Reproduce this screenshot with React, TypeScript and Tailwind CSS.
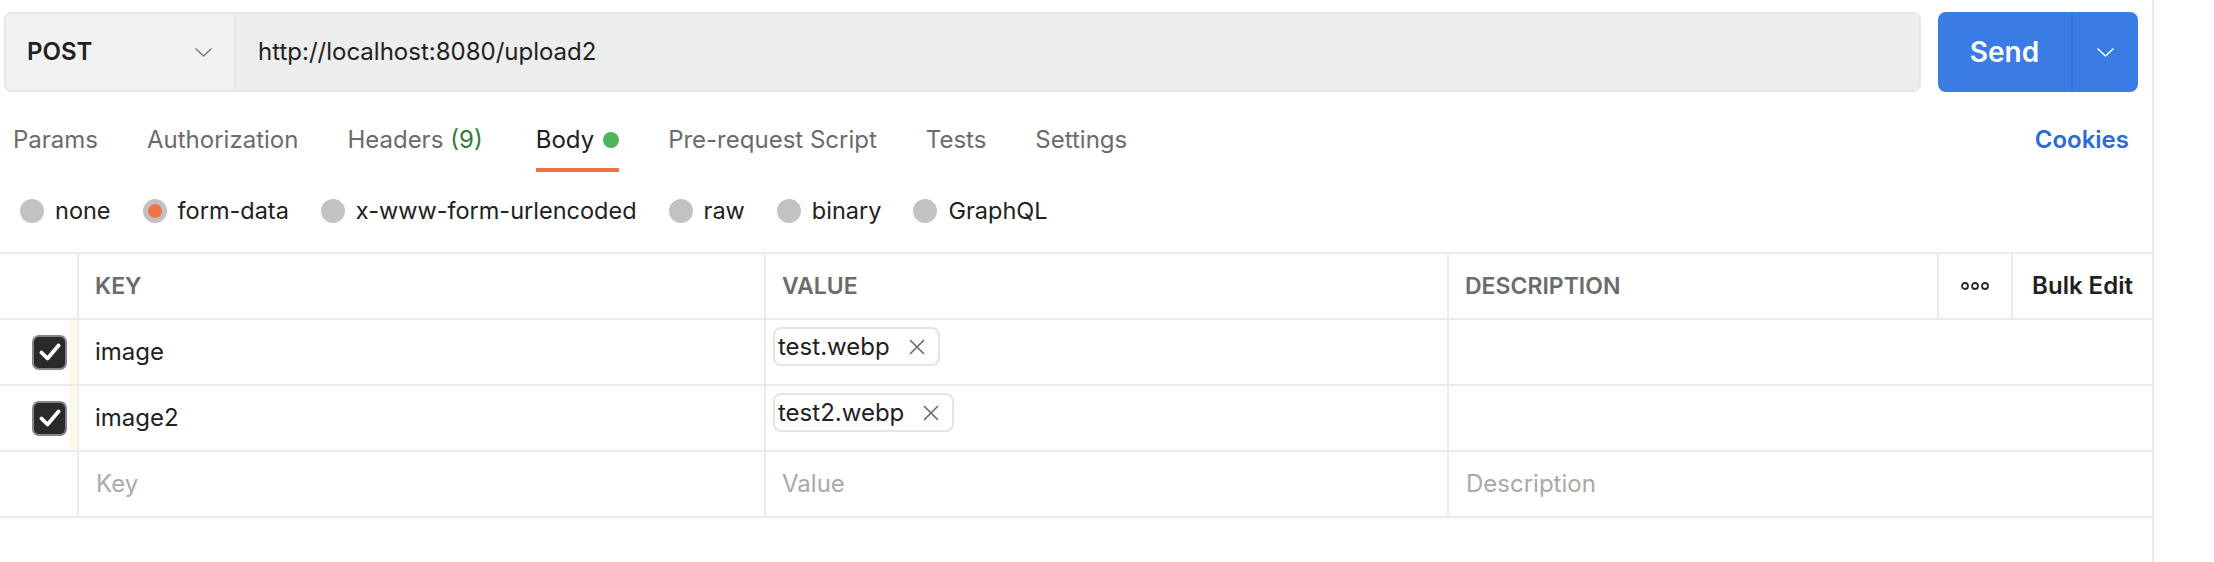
function Chevron({ color }: { color: string }) {
  return (
    <svg width="17" height="9" viewBox="0 0 17 9" fill="none">
      <path d="M1 1l7.5 7L16 1" stroke={color} strokeWidth="1.6" strokeLinecap="round" strokeLinejoin="round" />
    </svg>
  );
}

function Check() {
  return (
    <div className="w-[35px] h-[35px] rounded-[7px] bg-[#2a2a2a] border-2 border-[#858585] flex items-center justify-center">
      <svg width="22" height="18" viewBox="0 0 22 18" fill="none">
        <path d="M2.5 9.5l6 6L19.5 2.5" stroke="#fff" strokeWidth="3.8" strokeLinecap="round" strokeLinejoin="round" />
      </svg>
    </div>
  );
}

function Radio({ label, active }: { label: string; active?: boolean }) {
  return (
    <div className="flex items-center gap-[11px]">
      <span className="w-[24px] h-[24px] rounded-full bg-[#c2c2c2] flex items-center justify-center">
        {active && <span className="w-[14px] h-[14px] rounded-full bg-[#ef7446]" />}
      </span>
      <span className="text-[23.5px] text-[#212121]">{label}</span>
    </div>
  );
}

function FilePill({ name }: { name: string }) {
  return (
    <div className="h-[39px] ml-[7px] pl-[3px] pr-[13px] flex items-center gap-[19px] rounded-[8px] border-2 border-[#e4e4e4]">
      <span className="text-[24px] text-[#212121]">{name}</span>
      <svg width="16" height="16" viewBox="0 0 16 16" fill="none" stroke="#6b6b6b" strokeWidth="1.7" strokeLinecap="round">
        <path d="M1.5 1.5l13 13M14.5 1.5l-13 13" />
      </svg>
    </div>
  );
}

const tabs = ["Params", "Authorization", "Headers", "Body", "Pre-request Script", "Tests", "Settings"];

export default function App() {
  return (
    <div className="w-[2154px] h-[562px] bg-white border-r-2 border-[#ebebeb] font-['Inter',sans-serif]">
      {/* request bar */}
      <div className="flex pl-[4px] pr-[14px] pt-[12px] gap-[17px]">
        <div className="flex-1 flex h-[80px] rounded-[8px] border-2 border-[#e6e6e6] overflow-hidden">
          <div className="w-[230px] flex items-center justify-between pl-[21px] pr-[22px] bg-[#f2f2f2] border-r-2 border-[#e4e4e4]">
            <span className="text-[24px] font-semibold text-[#212121]">POST</span>
            <Chevron color="#7a7a7a" />
          </div>
          <div className="flex-1 flex items-center pl-[22px] bg-[#ededed]">
            <span className="text-[24px] text-[#212121]">http://localhost:8080/upload2</span>
          </div>
        </div>
        <div className="w-[200px] h-[80px] flex rounded-[8px] bg-[#3a7ce4] overflow-hidden">
          <div className="w-[135px] flex items-center justify-center border-r-2 border-[#3370d4] text-white text-[28px] font-semibold">
            Send
          </div>
          <div className="flex-1 flex items-center justify-center">
            <Chevron color="#ffffff" />
          </div>
        </div>
      </div>

      {/* tabs */}
      <div className="h-[80px] flex items-stretch pl-[13px] pr-[23px]">
        <div className="flex gap-[49px]">
          {tabs.map((t) => (
            <div key={t} className={`flex flex-col justify-end ${t === "Body" ? "ml-[4px]" : ""}`}>
              <div className={`h-[30px] flex items-center text-[24px] leading-[30px] ${t === "Body" ? "text-[#212121]" : "text-[#6b6b6b]"}`}>
                {t}
                {t === "Headers" && <span className="ml-[7px] text-[#2d7d33]">(9)</span>}
                {t === "Body" && <span className="ml-[9px] w-[16px] h-[16px] rounded-full bg-[#4fb55c]" />}
              </div>
              <div className={`mt-[13px] h-[4px] ${t === "Body" ? "bg-[#ed7245]" : "bg-transparent"}`} />
            </div>
          ))}
        </div>
        <div className="ml-auto flex items-start pt-[33px]">
          <span className="h-[30px] leading-[30px] text-[24px] font-semibold text-[#2a6bd9]">Cookies</span>
        </div>
      </div>

      {/* body type */}
      <div className="h-[80px] pb-[2px] flex items-center pl-[20px] gap-[32px]">
        <Radio label="none" />
        <Radio label="form-data" active />
        <Radio label="x-www-form-urlencoded" />
        <Radio label="raw" />
        <Radio label="binary" />
        <Radio label="GraphQL" />
      </div>

      {/* params table */}
      <div className="border-t-2 border-[#ebebeb]">
        <div className="h-[66px] grid grid-cols-[77px_687px_683px_490px_74px_141px] border-b-2 border-[#ebebeb] text-[23px] font-semibold">
          <div />
          <div className="border-l-2 border-[#ebebeb] flex items-center pl-[16px] text-[#6b6b6b]">KEY</div>
          <div className="border-l-2 border-[#ebebeb] flex items-center pl-[16px] text-[#6b6b6b]">VALUE</div>
          <div className="border-l-2 border-[#ebebeb] flex items-center pl-[16px] text-[#6b6b6b]">DESCRIPTION</div>
          <div className="border-l-2 border-[#ebebeb] flex items-center justify-center">
            <svg width="28" height="10" viewBox="0 0 28 10" fill="none" stroke="#2a2a2a" strokeWidth="1.8">
              <circle cx="4" cy="5" r="3" />
              <circle cx="14" cy="5" r="3" />
              <circle cx="24" cy="5" r="3" />
            </svg>
          </div>
          <div className="border-l-2 border-[#ebebeb] flex items-center justify-center text-[24px] text-[#212121]">Bulk Edit</div>
        </div>

        {[
          { key: "image", file: "test.webp" },
          { key: "image2", file: "test2.webp" },
        ].map((r) => (
          <div key={r.key} className="h-[66px] grid grid-cols-[77px_687px_683px_763px] border-b-2 border-[#ebebeb]">
            <div className="flex items-center justify-end">
              <Check />
              <div className="ml-[3px] w-[6px] self-stretch my-[1px] bg-[#fdf8e3]" />
              <div className="w-[1px]" />
            </div>
            <div className="border-l-2 border-[#ebebeb] flex items-center pl-[16px] text-[24px] text-[#212121]">{r.key}</div>
            <div className="border-l-2 border-[#ebebeb] flex items-start pt-[7px]">
              <FilePill name={r.file} />
            </div>
            <div className="border-l-2 border-[#ebebeb]" />
          </div>
        ))}

        <div className="h-[66px] grid grid-cols-[77px_687px_683px_763px] border-b-2 border-[#ebebeb] text-[24px] text-[#a9a9a9]">
          <div />
          <div className="border-l-2 border-[#ebebeb] flex items-center pl-[17px]">Key</div>
          <div className="border-l-2 border-[#ebebeb] flex items-center pl-[16px]">Value</div>
          <div className="border-l-2 border-[#ebebeb] flex items-center pl-[17px]">Description</div>
        </div>
      </div>
    </div>
  );
}
